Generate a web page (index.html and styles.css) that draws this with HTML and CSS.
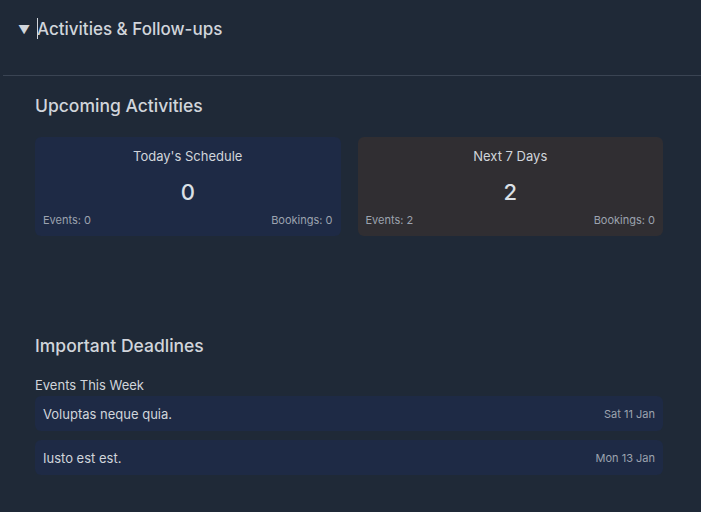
FILE: index.html
```html
<!DOCTYPE html>
<html>
<head>
<meta charset="utf-8">
<link rel="stylesheet" href="styles.css">
</head>
<body>
<div class="panel">
  <div class="summary">
    <span class="arrow">▼</span>
    <span class="title"><span class="caret"></span>Activities &amp; Follow-ups</span>
  </div>
  <div class="content">
    <h2 class="section-title">Upcoming Activities</h2>
    <div class="cards">
      <div class="card card-today">
        <div class="card-title">Today's Schedule</div>
        <div class="card-num">0</div>
        <div class="card-foot"><span>Events: 0</span><span>Bookings: 0</span></div>
      </div>
      <div class="card card-week">
        <div class="card-title">Next 7 Days</div>
        <div class="card-num">2</div>
        <div class="card-foot"><span>Events: 2</span><span>Bookings: 0</span></div>
      </div>
    </div>
    <h2 class="section-title deadlines">Important Deadlines</h2>
    <div class="sub-title">Events This Week</div>
    <div class="rows">
      <div class="row"><span class="row-name">Voluptas neque quia.</span><span class="row-date">Sat 11 Jan</span></div>
      <div class="row"><span class="row-name">Iusto est est.</span><span class="row-date">Mon 13 Jan</span></div>
    </div>
  </div>
</div>
</body>
</html>
```

FILE: styles.css
```css
html, body {
  margin: 0;
  padding: 0;
  background: #1f2937;
  height: 100%;
}
body {
  font-family: Inter, "Noto Sans", sans-serif;
  color: #d1d5db;
}
.panel {
  padding: 0 0 0 3px;
}
.summary {
  display: flex;
  align-items: center;
  height: 76px;
  padding-left: 15px;
  padding-bottom: 17px;
  box-sizing: border-box;
  border-bottom: 1px solid #3a4453;
}
.arrow {
  font-size: 12px;
  color: #d1d5db;
  width: 19px;
}
.title {
  position: relative;
  font-size: 17px;
  font-weight: 500;
  color: #d1d5db;
}
.caret {
  position: absolute;
  left: 0;
  top: -1px;
  height: 21px;
  border-left: 1px solid #d1d5db;
}
.content {
  padding: 18px 38px 0 32px;
}
.section-title {
  margin: 0;
  font-size: 17.5px;
  font-weight: 500;
  color: #d1d5db;
  line-height: 24px;
}
.cards {
  display: grid;
  grid-template-columns: 1fr 1fr;
  gap: 17px;
  margin-top: 19px;
}
.card {
  border-radius: 6px;
  height: 99px;
  padding: 11px 8px 9px;
  box-sizing: border-box;
  display: flex;
  flex-direction: column;
}
.card-today { background: #1e2a45; }
.card-week { background: #302e32; }
.card-title {
  text-align: center;
  font-size: 13px;
  line-height: 17px;
  color: #d1d5db;
}
.card-num {
  text-align: center;
  font-size: 22px;
  font-weight: 500;
  line-height: 26px;
  margin-top: 14px;
  color: #dbe0e6;
}
.card-foot {
  display: flex;
  justify-content: space-between;
  font-size: 11px;
  line-height: 14px;
  color: #9ca3af;
  margin-top: auto;
}
.deadlines {
  margin-top: 98px;
}
.sub-title {
  font-size: 13px;
  line-height: 16px;
  margin-top: 19px;
  color: #d1d5db;
}
.rows {
  display: flex;
  flex-direction: column;
  gap: 9px;
  margin-top: 3px;
}
.row {
  display: flex;
  justify-content: space-between;
  align-items: center;
  background: #1e2a45;
  border-radius: 6px;
  height: 35px;
  padding: 0 8px;
}
.row-name {
  font-size: 13px;
  color: #d1d5db;
}
.row-date {
  font-size: 11px;
  color: #9ca3af;
}
```
